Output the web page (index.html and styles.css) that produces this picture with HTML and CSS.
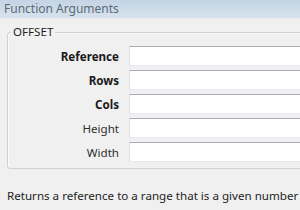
FILE: index.html
```html
<!DOCTYPE html>
<html lang="en">
<head>
    <meta charset="UTF-8">
    <title>Function Arguments</title>
    <link rel="stylesheet" href="styles.css">
</head>
<body>
    <div class="dialog">
        <div class="title-bar">Function Arguments</div>

        <div class="content">
            <!-- argument group -->
            <fieldset class="group">
                <legend>OFFSET</legend>
                <div class="args">
                    <label class="req">Reference</label>
                    <input type="text">
                    <label class="req">Rows</label>
                    <input type="text">
                    <label class="req">Cols</label>
                    <input type="text">
                    <label>Height</label>
                    <input type="text">
                    <label>Width</label>
                    <input type="text">
                </div>
            </fieldset>

            <p class="desc">Returns a reference to a range that is a given number of rows and columns from a given reference.</p>
        </div>
    </div>
</body>
</html>
```

FILE: styles.css
```css
html, body {
    margin: 0;
    padding: 0;
    background-color: #f0f0f0;
    overflow: hidden;
}

.dialog {
    width: 460px;
    font-family: 'Noto Sans', 'Open Sans', sans-serif;
    font-size: 11.6px;
    color: #1e1e1e;
}

.title-bar {
    height: 18px;
    line-height: 18px;
    padding-left: 4px;
    font-size: 12px;
    color: #5d6b78;
    background: linear-gradient(#c3d4e5, #d8e3ed);
    border-bottom: 1px solid #e4eaf0;
}

.content {
    padding: 6px 0 0 7px;
}

.group {
    margin: 0;
    padding: 7px 0 6px 0;
    border: 1px solid #d0d0d0;
    border-radius: 3px;
    box-shadow: inset 1px 1px 0 #fafafa;
}

.group legend {
    margin-left: 3px;
    padding: 0 2px;
    font-size: 11.6px;
    line-height: 14px;
}

.args {
    display: grid;
    grid-template-columns: 111px 1fr;
    column-gap: 10px;
    row-gap: 4px;
    align-items: center;
}

.args label {
    text-align: right;
    color: #2e2e2e;
}

.args label.req {
    font-weight: bold;
    color: #1a1a1a;
}

.args input {
    height: 20px;
    box-sizing: border-box;
    margin: 0;
    background-color: #fff;
    border: 1px solid #dbdfe6;
    border-top-color: #abadb3;
    border-bottom-color: #e3e9ef;
}

.desc {
    margin: 19px 0 0 0;
    white-space: nowrap;
    font-size: 11.6px;
}
```
